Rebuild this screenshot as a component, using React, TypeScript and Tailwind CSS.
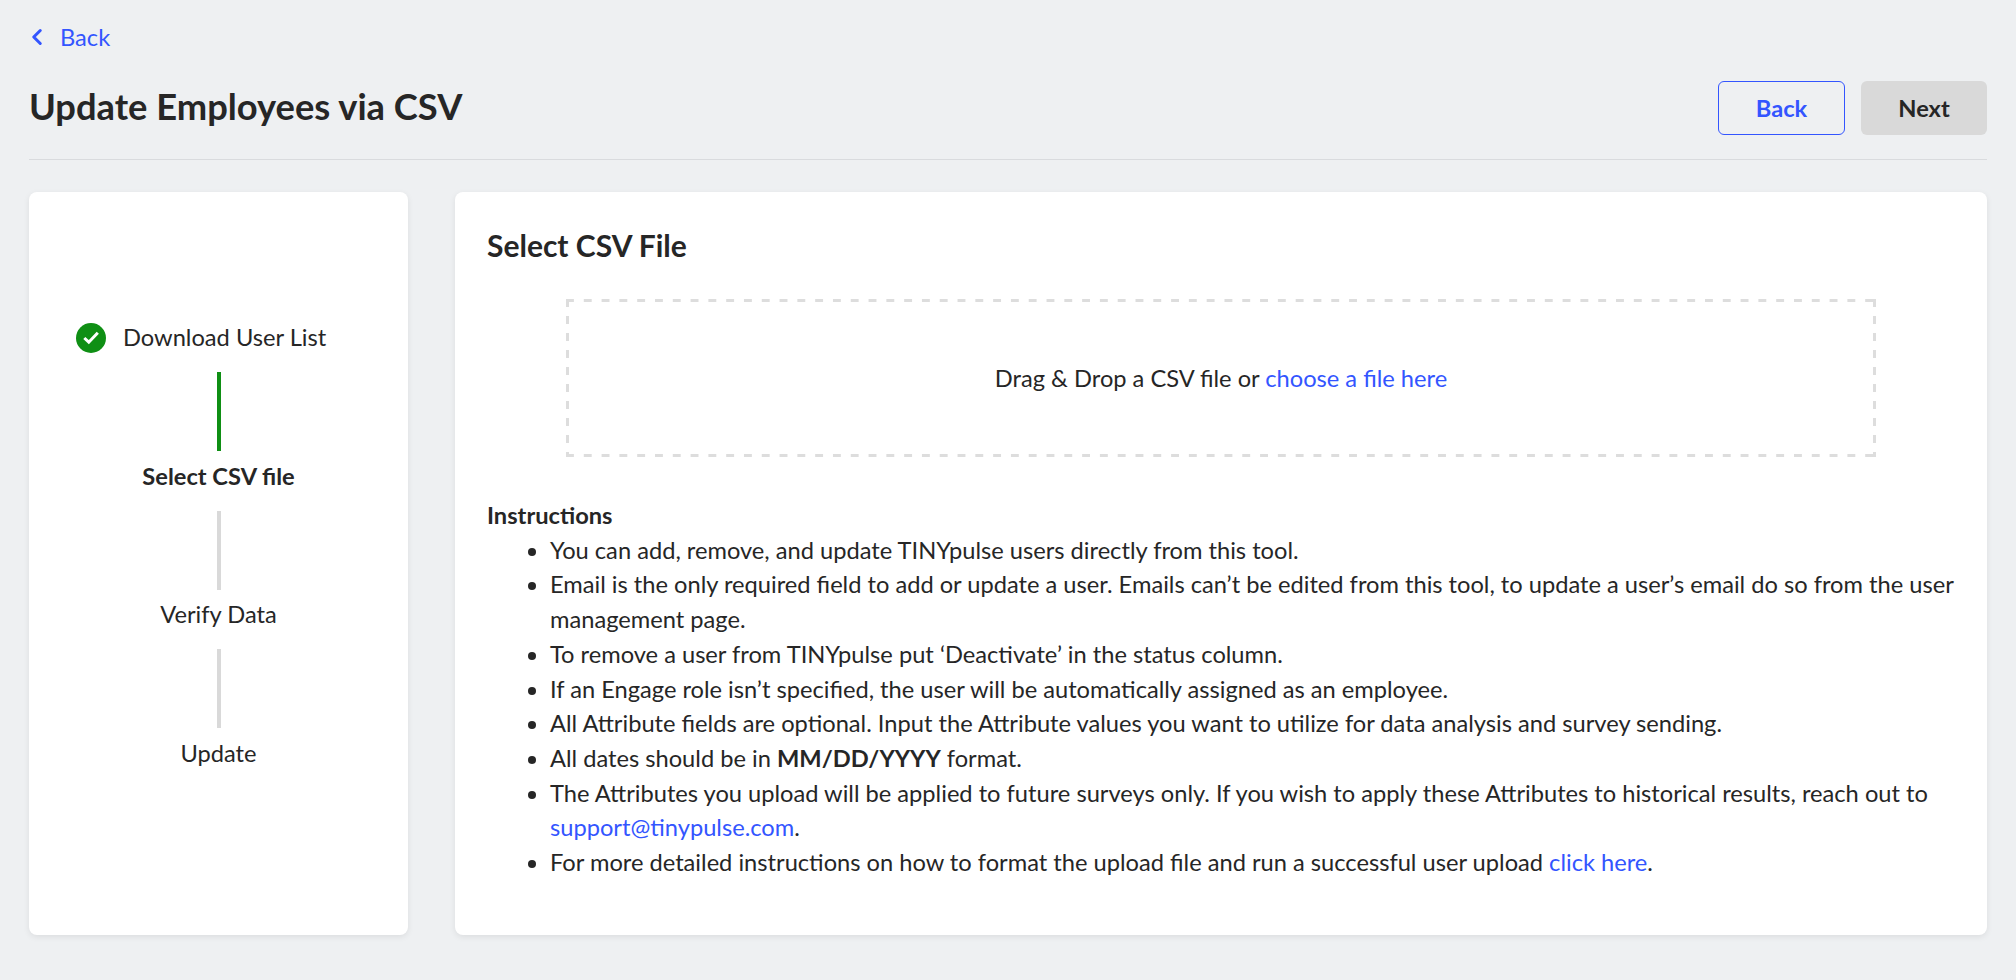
import React from "react";
import { ChevronLeft } from "lucide-react";

const steps = [
  { label: "Select CSV file", bold: true, line: "bg-[#0f8f14]" },
  { label: "Verify Data", bold: false, line: "bg-[#d9d9d9]" },
  { label: "Update", bold: false, line: "bg-[#d9d9d9]" },
];

const Stepper = () => {
  return (
    <aside className="w-[379px] shrink-0 rounded-[8px] bg-white shadow-[0_2px_6px_rgba(0,0,0,0.08)] pt-[129px] flex flex-col">
      <div className="flex items-center h-[33px] pl-[47px]">
        <span className="w-[30px] h-[30px] rounded-full bg-[#0f8f14] flex items-center justify-center">
          <svg width="20" height="20" viewBox="0 0 20 20" fill="none">
            <path d="M3.3 10 L7.8 14.2 L16.8 4.7" stroke="#fff" strokeWidth="3" />
          </svg>
        </span>
        <span className="ml-[17px]">Download User List</span>
      </div>
      {steps.map((s) => (
        <div key={s.label} className="flex flex-col items-center w-[380px] pr-[1px]">
          <div className={`w-[4px] h-[79px] mt-[18px] mb-[7.5px] ${s.line}`} />
          <span className={`h-[34px] leading-[34px] ${s.bold ? "font-bold" : ""}`}>{s.label}</span>
        </div>
      ))}
    </aside>
  );
};

const Dropzone = () => {
  return (
    <div className="mx-[79px] mt-[34px] h-[158px] flex items-center justify-center bg-[linear-gradient(to_right,#ddd_8px,transparent_8px),linear-gradient(to_right,#ddd_8px,transparent_8px),linear-gradient(to_bottom,#ddd_8px,transparent_8px),linear-gradient(to_bottom,#ddd_8px,transparent_8px)] [background-size:17.8px_3px,17.8px_3px,3px_17px,3px_17px] [background-repeat:repeat-x,repeat-x,repeat-y,repeat-y] [background-position:0_0,0_100%,0_0,100%_0]">
      <p>
        Drag &amp; Drop a CSV file or <a className="text-[#3355ff]">choose a file here</a>
      </p>
    </div>
  );
};

export default function App() {
  return (
    <div className="min-h-[980px] bg-[#eef0f2] px-[29px] font-['Lato',sans-serif] text-[23.66px] leading-[34.7px] text-[#262626]">
      <a className="flex items-center h-[74px] text-[#3355ff]">
        <ChevronLeft className="w-[26px] h-[26px] -ml-[5px]" strokeWidth={2.8} />
        <span className="ml-[10px]">Back</span>
      </a>
      <header className="flex items-center justify-between h-[86px] pb-[18px] border-b border-[#d9dbde]">
        <h1 className="text-[36.3px] leading-[44px] font-bold pb-[4px]">Update Employees via CSV</h1>
        <div className="flex gap-[16px]">
          <button className="w-[127px] h-[54px] pt-[1px] rounded-[6px] border border-[#3355ff] text-[#3355ff] font-bold">Back</button>
          <button className="w-[126px] h-[54px] pt-[1px] rounded-[6px] bg-[#d9d9d9] font-bold">Next</button>
        </div>
      </header>
      <main className="flex gap-[47px] mt-[32px]">
        <Stepper />
        <section className="flex-1 h-[743px] rounded-[8px] bg-white shadow-[0_2px_6px_rgba(0,0,0,0.08)] px-[32px] pt-[33px]">
          <h2 className="text-[30px] leading-[40px] font-bold">Select CSV File</h2>
          <Dropzone />
          <h3 className="font-bold mt-[41px]">Instructions</h3>
          <ul className="list-disc pl-[63px]">
            <li>You can add, remove, and update TINYpulse users directly from this tool.</li>
            <li>Email is the only required field to add or update a user. Emails can’t be edited from this tool, to update a user’s email do so from the user management page.</li>
            <li>To remove a user from TINYpulse put ‘Deactivate’ in the status column.</li>
            <li>If an Engage role isn’t specified, the user will be automatically assigned as an employee.</li>
            <li>All Attribute fields are optional. Input the Attribute values you want to utilize for data analysis and survey sending.</li>
            <li>All dates should be in <b>MM/DD/YYYY</b> format.</li>
            <li>The Attributes you upload will be applied to future surveys only. If you wish to apply these Attributes to historical results, reach out to <a className="text-[#3355ff]">support@tinypulse.com</a>.</li>
            <li>For more detailed instructions on how to format the upload file and run a successful user upload <a className="text-[#3355ff]">click here</a>.</li>
          </ul>
        </section>
      </main>
    </div>
  );
}
